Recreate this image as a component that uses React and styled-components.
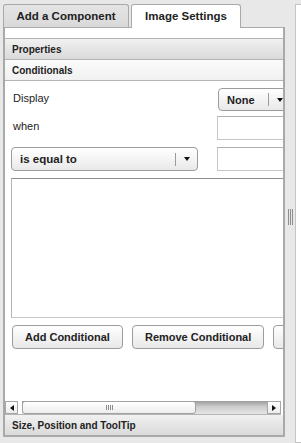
import React from "react";
import styled, { createGlobalStyle } from "styled-components";

const GlobalStyle = createGlobalStyle`
  html, body {
    margin: 0;
    padding: 0;
  }
  body {
    background: #e8e8e8;
    font-family: "Liberation Sans", Arial, sans-serif;
    color: #222;
    overflow: hidden;
  }
`;

const Page = styled.div`
  display: flex;
  width: 301px;
  height: 443px;
  overflow: hidden;
`;

const LeftColumn = styled.div`
  flex: none;
  width: 282px;
  padding-left: 3px;
  display: flex;
  flex-direction: column;
`;

const TabBar = styled.div`
  display: flex;
  align-items: flex-end;
  gap: 2px;
  height: 27px;
  position: relative;
  z-index: 1;
`;

const Tab = styled.div`
  box-sizing: border-box;
  width: ${props => props.$width}px;
  height: ${props => (props.$active ? 24 : 23)}px;
  margin-bottom: ${props => (props.$active ? -1 : 0)}px;
  border: 1px solid #a9a9a9;
  border-bottom: none;
  border-radius: 3px 3px 0 0;
  background: ${props =>
    props.$active ? "#fff" : "linear-gradient(#e4e4e4, #d9d9d9)"};
  font-size: 11.5px;
  font-weight: bold;
  color: #222;
  display: flex;
  align-items: center;
  justify-content: center;
  padding-bottom: ${props => (props.$active ? 1 : 0)}px;
`;

const Panel = styled.div`
  box-sizing: border-box;
  height: 410px;
  background: #fff;
  border: 2px solid #a9a9a9;
  border-top: 1px solid #a9a9a9;
  display: flex;
  flex-direction: column;
`;

const TopGap = styled.div`
  height: 10px;
  flex: none;
`;

const SectionHeader = styled.div`
  flex: none;
  height: 20px;
  padding-left: 7px;
  display: flex;
  align-items: center;
  font-size: 10px;
  font-weight: bold;
  color: #222;
  border-top: ${props => (props.$first ? "1px solid #b4b4b4" : "none")};
  border-bottom: ${props => (props.$last ? "none" : "1px solid #b4b4b4")};
  background: ${props =>
    props.$light
      ? "linear-gradient(#fbfbfb, #f1f1f1)"
      : "linear-gradient(#f1f1f1, #dadada)"};
`;

const ScrollArea = styled.div`
  flex: 1;
  overflow: hidden;
  position: relative;
`;

const Content = styled.div`
  width: 390px;
  padding: 7px 0 0 6px;
`;

const Row = styled.div`
  display: grid;
  grid-template-columns: 206px 1fr;
  align-items: center;
  height: ${props => props.$height}px;
  margin-top: ${props => props.$gap}px;
`;

const Label = styled.div`
  font-size: 11px;
  padding: 0 0 4px 2px;
  color: #222;
`;

const Select = styled.div`
  box-sizing: border-box;
  width: ${props => props.$width}px;
  height: ${props => props.$height}px;
  margin-left: ${props => props.$offset || 0}px;
  border: 1px solid #9c9c9c;
  border-radius: 4px;
  background: linear-gradient(#ffffff, #e9e9e9);
  display: flex;
  align-items: center;
  font-weight: bold;
  font-size: ${props => props.$size}px;
  color: #222;
`;

const SelectText = styled.span`
  flex: 1;
  padding-left: 8px;
`;

const Divider = styled.span`
  width: 1px;
  height: 13px;
  background: #9a9a9a;
`;

const ArrowBox = styled.span`
  width: 21px;
  display: flex;
  justify-content: center;
`;

const DownArrow = styled.span`
  width: 0;
  height: 0;
  border-left: 3px solid transparent;
  border-right: 3px solid transparent;
  border-top: 4px solid #111;
`;

const TextInput = styled.div`
  box-sizing: border-box;
  width: 120px;
  height: 24px;
  border: 1px solid #c6c6c6;
  border-top-color: #b0b0b0;
  background: #fff;
`;

const TextArea = styled.div`
  box-sizing: border-box;
  width: 376px;
  height: 140px;
  margin-top: 7px;
  border: 1px solid #c6c6c6;
  border-top-color: #8e8e8e;
  border-left-color: #b4b4b4;
  background: #fff;
`;

const ButtonRow = styled.div`
  display: flex;
  gap: 9px;
  margin-top: 7px;
  padding-left: 1px;
`;

const Button = styled.div`
  box-sizing: border-box;
  height: 24px;
  min-width: ${props => props.$minWidth || 0}px;
  padding: 0 12px;
  border: 1px solid #9c9c9c;
  border-radius: 4px;
  background: linear-gradient(#ffffff, #e8e8e8);
  font-size: 11px;
  font-weight: bold;
  color: #222;
  display: flex;
  align-items: center;
  white-space: nowrap;
`;

const HScrollbar = styled.div`
  flex: none;
  height: 13px;
  margin-right: 2px;
  display: flex;
  border-bottom: 1px solid #b4b4b4;
`;

const ScrollButton = styled.div`
  box-sizing: border-box;
  width: ${props => props.$width}px;
  height: 13px;
  border: 1px solid #a6a6a6;
  background: linear-gradient(#ffffff, #ececec);
  display: flex;
  align-items: center;
  justify-content: center;
`;

const SideArrow = styled.span`
  width: 0;
  height: 0;
  border-top: 3px solid transparent;
  border-bottom: 3px solid transparent;
  ${props =>
    props.$dir === "left"
      ? "border-right: 4px solid #111;"
      : "border-left: 4px solid #111;"}
`;

const Track = styled.div`
  flex: 1;
  display: flex;
  background: linear-gradient(#9c9c9c, #cdcdcd 45%, #e6e6e6);
`;

const TrackStart = styled.div`
  width: 4px;
  background: #fff;
`;

const Thumb = styled.div`
  box-sizing: border-box;
  width: 174px;
  height: 13px;
  border: 1px solid #a2a2a2;
  border-radius: 3px;
  background: linear-gradient(#ffffff, #ededed);
  display: flex;
  align-items: center;
  justify-content: center;
  gap: 1px;
`;

const GripLine = styled.span`
  width: 1px;
  height: 5px;
  background: #8c8c8c;
`;

const Splitter = styled.div`
  flex: none;
  width: 10px;
  display: flex;
  justify-content: center;
  align-items: flex-start;
  padding-top: 209px;
  box-sizing: border-box;
  gap: 1px;
`;

const SplitLine = styled.span`
  width: 1px;
  height: 16px;
  background: #8e8e8e;
`;

const RightPanel = styled.div`
  flex: 1;
  margin-top: 4px;
  background: #fff;
  border: 1px solid #c4c4c4;
  border-right: none;
`;

const Dropdown = ({ text, width, height, size, offset }) => (
  <Select $width={width} $height={height} $size={size} $offset={offset}>
    <SelectText>{text}</SelectText>
    <Divider />
    <ArrowBox>
      <DownArrow />
    </ArrowBox>
  </Select>
);

const App = () => {
  return (
    <Page>
      <GlobalStyle />
      <LeftColumn>
        <TabBar>
          <Tab $width={126}>Add a Component</Tab>
          <Tab $width={110} $active>
            Image Settings
          </Tab>
        </TabBar>
        <Panel>
          <TopGap />
          <SectionHeader $first>Properties</SectionHeader>
          <SectionHeader $light>Conditionals</SectionHeader>
          <ScrollArea>
            <Content>
              <Row $height={23} $gap={0}>
                <Label>Display</Label>
                <Dropdown text="None" width={73} height={23} size={11} offset={1} />
              </Row>
              <Row $height={24} $gap={5}>
                <Label>when</Label>
                <TextInput />
              </Row>
              <Row $height={24} $gap={7}>
                <Dropdown text="is equal to" width={187} height={24} size={11.5} />
                <TextInput />
              </Row>
              <TextArea />
              <ButtonRow>
                <Button>Add Conditional</Button>
                <Button>Remove Conditional</Button>
                <Button $minWidth={90} />
              </ButtonRow>
            </Content>
          </ScrollArea>
          <HScrollbar>
            <ScrollButton $width={13}>
              <SideArrow $dir="left" />
            </ScrollButton>
            <Track>
              <TrackStart />
              <Thumb>
                <GripLine />
                <GripLine />
                <GripLine />
                <GripLine />
              </Thumb>
            </Track>
            <ScrollButton $width={14}>
              <SideArrow $dir="right" />
            </ScrollButton>
          </HScrollbar>
          <SectionHeader $last>Size, Position and ToolTip</SectionHeader>
        </Panel>
      </LeftColumn>
      <Splitter>
        <SplitLine />
        <SplitLine />
        <SplitLine />
      </Splitter>
      <RightPanel />
    </Page>
  );
};

export default App;
